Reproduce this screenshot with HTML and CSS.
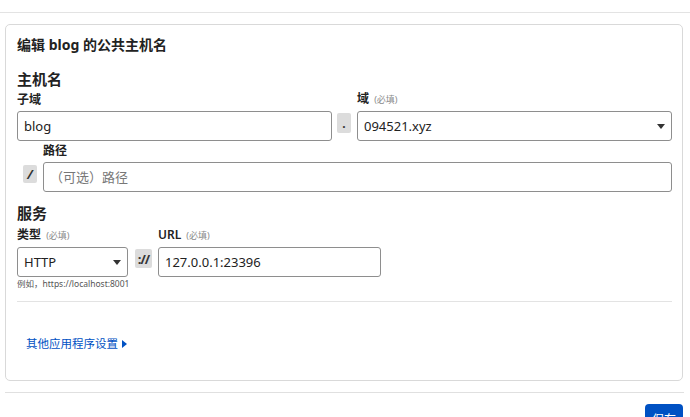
FILE: index.html
```html
<!DOCTYPE html>
<html lang="zh-CN">

<head>
    <meta charset="UTF-8">
    <meta name="viewport" content="width=device-width, initial-scale=1.0">
    <title>编辑公共主机名</title>
    <link rel="stylesheet" href="styles.css">
</head>

<body>
    <div class="top-rule"></div>

    <div class="host-card">
        <h2 class="card-title">编辑 blog 的公共主机名</h2>

        <!-- Hostname -->
        <h3 class="section-title">主机名</h3>
        <div class="field-row">
            <div class="field">
                <label class="field-label">子域</label>
                <input class="text-input" type="text" value="blog">
            </div>
            <span class="joiner joiner-dot">.</span>
            <div class="field">
                <label class="field-label">域 <span class="req">(必填)</span></label>
                <div class="select-box">
                    <select class="text-input select-input">
                        <option>094521.xyz</option>
                    </select>
                    <span class="caret"></span>
                </div>
            </div>
        </div>

        <div class="field-row path-row">
            <span class="joiner joiner-slash">/</span>
            <div class="field">
                <label class="field-label">路径</label>
                <input class="text-input" type="text" placeholder="（可选）路径">
            </div>
        </div>

        <!-- Service -->
        <h3 class="section-title service-title">服务</h3>
        <div class="field-row service-row">
            <div class="field type-field">
                <label class="field-label">类型 <span class="req">(必填)</span></label>
                <div class="select-box">
                    <select class="text-input select-input">
                        <option>HTTP</option>
                    </select>
                    <span class="caret"></span>
                </div>
            </div>
            <span class="joiner joiner-scheme">://</span>
            <div class="field url-field">
                <label class="field-label">URL <span class="req">(必填)</span></label>
                <input class="text-input" type="text" value="127.0.0.1:23396">
            </div>
        </div>
        <p class="hint">例如，https://localhost:8001</p>

        <hr class="card-divider">

        <a class="more-link" href="#">其他应用程序设置 <span class="more-caret"></span></a>
    </div>

    <div class="bottom-rule"></div>

    <div class="actions">
        <button class="save-btn">保存</button>
    </div>
</body>

</html>
```

FILE: styles.css
```css
body {
    margin: 0;
    font-family: "Noto Sans", "Noto Sans CJK SC", sans-serif;
    color: #222;
    background: #fff;
}

.top-rule {
    height: 12px;
    border-bottom: 1px solid #e3e3e3;
}

/* Card */

.host-card {
    margin: 11px 7px 0 5px;
    padding: 10px 10px 27px 11px;
    border: 1px solid #d9d9d9;
    border-radius: 5px;
}

.card-title {
    margin: 0;
    font-size: 14px;
    line-height: 20px;
    font-weight: 700;
}

.section-title {
    margin: 14px 0 0;
    font-size: 15px;
    line-height: 20px;
    font-weight: 700;
}

.service-title {
    margin-top: 11px;
}

/* Fields */

.field-row {
    display: flex;
    align-items: flex-end;
    gap: 5px;
}

.field {
    display: flex;
    flex-direction: column;
    flex: 1;
    min-width: 0;
}

.field-label {
    font-size: 12px;
    line-height: 16px;
    font-weight: 600;
    margin: 2px 0 3px;
}

.req {
    font-size: 9px;
    font-weight: 400;
    color: #8a8a8a;
    margin-left: 2px;
}

.text-input {
    box-sizing: border-box;
    width: 100%;
    height: 30px;
    padding: 0 6px;
    border: 1px solid #8e8e8e;
    border-radius: 3px;
    font-family: inherit;
    font-size: 13px;
    color: #222;
    background: #fff;
}

.text-input::placeholder {
    color: #777;
}

.select-box {
    position: relative;
}

.select-input {
    appearance: none;
    -webkit-appearance: none;
}

.caret {
    position: absolute;
    right: 7px;
    top: 13px;
    border-left: 4px solid transparent;
    border-right: 4px solid transparent;
    border-top: 5px solid #333;
}

.joiner {
    display: flex;
    align-items: center;
    justify-content: center;
    width: 14px;
    height: 20px;
    margin-bottom: 8px;
    background: #dcdcdc;
    border-radius: 2px;
    font-size: 12px;
    font-weight: 700;
    color: #333;
}

.joiner-dot {
    margin-right: 1px;
}

.path-row {
    gap: 6px;
    padding-left: 6px;
}

.joiner-slash {
    height: 18px;
    margin-bottom: 9px;
    font-size: 13px;
    font-style: italic;
}

.service-row {
    gap: 6px;
    margin-top: 2px;
}

.type-field {
    flex: 0 0 111px;
    margin-right: 1px;
}

.url-field {
    flex: 0 0 223px;
}

.joiner-scheme {
    width: 17px;
    height: 19px;
    margin-bottom: 9px;
    font-size: 13px;
    letter-spacing: -1px;
}

.hint {
    margin: 1px 0 0;
    font-size: 8.5px;
    line-height: 12px;
    color: #555;
}

.card-divider {
    margin: 11px 0 0;
    border: none;
    border-top: 1px solid #e3e3e3;
}

.more-link {
    display: inline-flex;
    align-items: center;
    gap: 4px;
    margin: 34px 0 0 9px;
    font-size: 11.5px;
    line-height: 16px;
    color: #0051c3;
    text-decoration: none;
}

.more-caret {
    border-top: 4px solid transparent;
    border-bottom: 4px solid transparent;
    border-left: 5px solid #0051c3;
}

/* Footer */

.bottom-rule {
    margin: 11px 6px 0 5px;
    border-top: 1px solid #e0e0e0;
}

.actions {
    display: flex;
    justify-content: flex-end;
    padding: 11px 7px 0 0;
}

.save-btn {
    width: 38px;
    height: 30px;
    padding: 0;
    border: none;
    border-radius: 4px;
    background: #0051c3;
    color: #fff;
    font-family: inherit;
    font-size: 12px;
}
```
